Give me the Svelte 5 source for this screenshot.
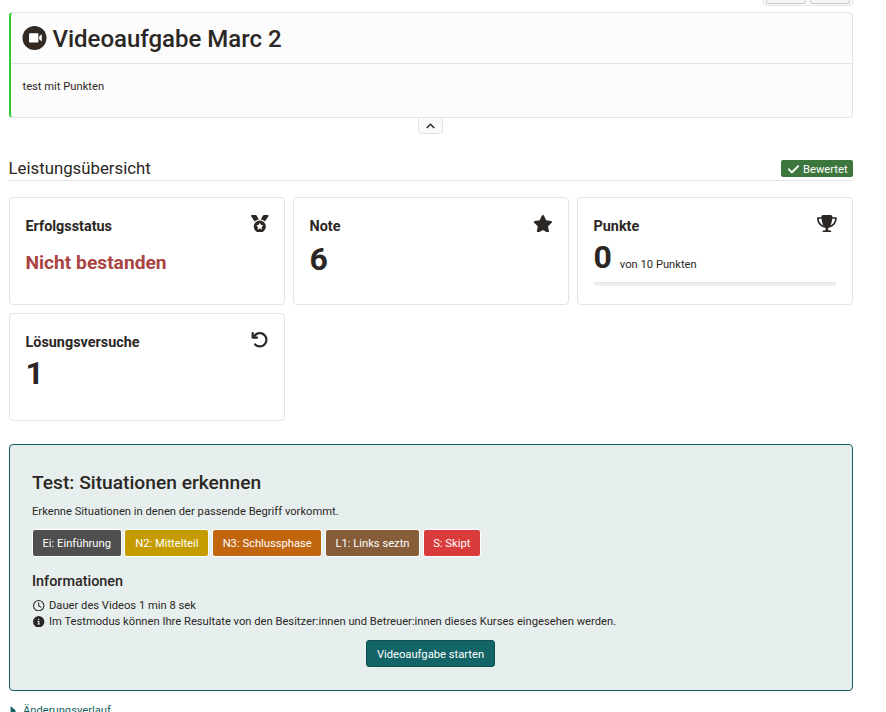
<script>
  const tags = [
    { label: 'Ei: Einführung', tone: 'gray', width: 89.5 },
    { label: 'N2: Mittelteil', tone: 'gold', width: 85.1 },
    { label: 'N3: Schlussphase', tone: 'orange', width: 110 },
    { label: 'L1: Links seztn', tone: 'brown', width: 95 },
    { label: 'S: Skipt', tone: 'red', width: 58 }
  ];

  const medal =
    'M4.1 38.2C1.4 34.2 0 29.4 0 24.6C0 11 11 0 24.6 0H133.9c11.2 0 21.7 5.9 27.4 15.5l68.5 114.1c-48.2 6.1-91.3 28.6-123.4 61.9L4.1 38.2zm503.7 0L405.6 191.5c-32.1-33.3-75.2-55.8-123.4-61.9L350.7 15.5C356.5 5.9 366.9 0 378.1 0H487.4C501 0 512 11 512 24.6c0 4.8-1.4 9.6-4.1 13.6zM80 336a176 176 0 1 1 352 0A176 176 0 1 1 80 336zm184.4-94.9c-3.4-7-13.3-7-16.8 0l-22.4 45.4c-1.4 2.8-4 4.7-7 5.1L168 298.9c-7.7 1.1-10.7 10.5-5.2 16l36.3 35.4c2.2 2.2 3.2 5.2 2.7 8.3l-8.6 49.9c-1.3 7.6 6.7 13.5 13.6 9.9l44.8-23.6c2.7-1.4 6-1.4 8.7 0l44.8 23.6c6.9 3.6 14.9-2.2 13.6-9.9l-8.6-49.9c-.5-3 .5-6.1 2.7-8.3l36.3-35.4c5.6-5.4 2.5-14.8-5.2-16l-50.1-7.3c-3-.4-5.7-2.4-7-5.1l-22.4-45.4z';
  const star =
    'M316.9 18C311.6 7 300.4 0 288.1 0s-23.4 7-28.8 18L195 150.3 51.4 171.5c-12 1.8-22 10.2-25.7 21.7s-.7 24.2 7.9 32.7L137.8 329 113.2 474.7c-2 12 3 24.2 12.9 31.3s23 8 33.8 2.3l128.3-68.5 128.3 68.5c10.8 5.7 23.9 4.9 33.8-2.3s14.9-19.3 12.9-31.3L438.5 329 542.7 225.9c8.6-8.5 11.7-21.2 7.9-32.7s-13.7-19.9-25.7-21.7L381.2 150.3 316.9 18z';
  const trophy =
    'M400 0H176c-26.5 0-48.1 21.8-47.1 48.2c.2 5.3 .4 10.6 .7 15.8H24C10.7 64 0 74.7 0 88c0 92.6 33.5 157 78.5 200.7c44.3 43.1 98.3 64.8 138.1 75.8c23.4 6.5 39.4 26 39.4 45.6c0 20.9-17 37.9-37.9 37.9H192c-17.7 0-32 14.3-32 32s14.3 32 32 32H384c17.7 0 32-14.3 32-32s-14.3-32-32-32H357.9C337 448 320 431 320 410.1c0-19.6 15.9-39.2 39.4-45.6c39.9-11 93.9-32.7 138.2-75.8C542.5 245 576 180.6 576 88c0-13.3-10.7-24-24-24H446.4c.3-5.2 .5-10.4 .7-15.8C448.1 21.8 426.5 0 400 0zM48.9 112h84.4c9.1 90.1 29.2 150.3 51.9 190.6c-24.9-11-50.8-26.5-73.2-48.3c-32-31.1-58-76-63-142.3zM464.1 254.3c-22.4 21.8-48.3 37.3-73.2 48.3c22.7-40.3 42.8-100.5 51.9-190.6h84.4c-5.1 66.3-31.1 111.2-63 142.3z';
  const undo =
    'M125.7 160H176c17.7 0 32 14.3 32 32s-14.3 32-32 32H48c-17.7 0-32-14.3-32-32V64c0-17.7 14.3-32 32-32s32 14.3 32 32v51.2L97.6 97.6c87.5-87.5 229.3-87.5 316.8 0s87.5 229.3 0 316.8s-229.3 87.5-316.8 0c-12.5-12.5-12.5-32.8 0-45.3s32.8-12.5 45.3 0c62.5 62.5 163.8 62.5 226.3 0s62.5-163.8 0-226.3s-163.8-62.5-226.3 0L125.7 160z';
  const clock =
    'M464 256A208 208 0 1 1 48 256a208 208 0 1 1 416 0zM0 256a256 256 0 1 0 512 0A256 256 0 1 0 0 256zM232 120V256c0 8 4 15.5 10.7 20l96 64c11 7.4 25.9 4.4 33.3-6.7s4.4-25.9-6.7-33.3L280 243.2V120c0-13.3-10.7-24-24-24s-24 10.7-24 24z';
  const info =
    'M256 512A256 256 0 1 0 256 0a256 256 0 1 0 0 512zM216 336h24V272H216c-13.3 0-24-10.7-24-24s10.7-24 24-24h48c13.3 0 24 10.7 24 24v88h8c13.3 0 24 10.7 24 24s-10.7 24-24 24H216c-13.3 0-24-10.7-24-24s10.7-24 24-24zm40-208a32 32 0 1 1 0 64 32 32 0 1 1 0-64z';
  const check =
    'M438.6 105.4c12.5 12.5 12.5 32.8 0 45.3l-256 256c-12.5 12.5-32.8 12.5-45.3 0l-128-128c-12.5-12.5-12.5-32.8 0-45.3s32.8-12.5 45.3 0L160 338.7 393.4 105.4c12.5-12.5 32.8-12.5 45.3 0z';

  const cards = [
    { title: 'Erfolgsstatus', icon: medal, box: '0 0 512 512', width: 17.6, status: 'Nicht bestanden' },
    { title: 'Note', icon: star, box: '0 0 576 512', width: 19.8, value: '6' },
    { title: 'Punkte', icon: trophy, box: '0 0 576 512', width: 19.8, value: '0', addon: 'von 10 Punkten', progress: true },
    { title: 'Lösungsversuche', icon: undo, box: '0 0 512 512', width: 17.6, value: '1', tight: true }
  ];
</script>

<main>
  <div class="toolbar">
    <div class="group"><span></span><span></span></div>
  </div>

  <section class="intro">
    <header>
      <svg width="25" height="25" viewBox="0 0 25 25">
        <circle cx="12.5" cy="12.1" r="12" fill="#332923" />
        <rect x="7" y="7.3" width="9.4" height="9.2" rx="1" fill="#fff" />
        <path d="M17.2 10.6 19.8 8.2v7.4l-2.6-2.4z" fill="#fff" />
      </svg>
      <h1>Videoaufgabe Marc 2</h1>
    </header>
    <p>test mit Punkten</p>
  </section>
  <div class="collapse-row">
    <button class="collapse" aria-label="Einklappen">
      <svg width="9" height="6" viewBox="0 0 9 6"><path d="M.8 5.1 4.5 1.3 8.2 5.1" fill="none" stroke="#2b2724" stroke-width="1.5" /></svg>
    </button>
  </div>

  <div class="overview">
    <h2>Leistungsübersicht</h2>
    <span class="graded">
      <svg width="11" height="12.6" viewBox="0 0 448 512"><path d={check} fill="#fff" stroke="#fff" stroke-width="14" /></svg>
      <span>Bewertet</span>
    </span>
  </div>

  <div class="cards">
    {#each cards as card}
      <article>
        <div class="card-head">
          <h3>{card.title}</h3>
          <svg width={card.width} height="17.6" viewBox={card.box}><path d={card.icon} fill="#2b2724" /></svg>
        </div>
        {#if card.status}
          <div class="status">{card.status}</div>
        {:else}
          <div class="value" class:scored={card.progress} class:tight={card.tight}>
            <strong>{card.value}</strong>{#if card.addon}<small>{card.addon}</small>{/if}
          </div>
        {/if}
        {#if card.progress}<div class="progress"></div>{/if}
      </article>
    {/each}
  </div>

  <section class="test">
    <h2>Test: Situationen erkennen</h2>
    <p>Erkenne Situationen in denen der passende Begriff vorkommt.</p>
    <div class="tags">
      {#each tags as tag}
        <span class={tag.tone} style="width: {tag.width}px">{tag.label}</span>
      {/each}
    </div>
    <h4>Informationen</h4>
    <div class="line">
      <svg width="11.4" height="11.4" viewBox="0 0 512 512"><path d={clock} fill="#2b2724" /></svg>
      <span>Dauer des Videos 1 min 8 sek</span>
    </div>
    <div class="line">
      <svg width="11.4" height="11.4" viewBox="0 0 512 512"><path d={info} fill="#2b2724" /></svg>
      <span>Im Testmodus können Ihre Resultate von den Besitzer:innen und Betreuer:innen dieses Kurses eingesehen werden.</span>
    </div>
    <button class="start">Videoaufgabe starten</button>
  </section>

  <div class="history">
    <svg width="6" height="10" viewBox="0 0 6 10"><path d="M.6 0 5.6 4.4V5.6L.6 10z" fill="#136062" /></svg>
    <span>Änderungsverlauf</span>
  </div>
</main>

<style>
  :global(body) {
    background: #fff;
    overflow: hidden;
  }
  main {
    box-sizing: border-box;
    width: 886px;
    height: 712px;
    overflow: hidden;
    padding: 0 33px 0 9px;
    font: 11.2px/16px Roboto, sans-serif;
    color: #2b2724;
  }
  h1, h2, h3, h4, p {
    margin: 0;
    font-weight: 500;
  }
  p { font-weight: 400; }
  svg { display: block; flex: none; }
  button { font: inherit; padding: 0; box-sizing: border-box; }

  .toolbar {
    height: 12px;
    display: flex;
    justify-content: flex-end;
    align-items: flex-start;
  }
  .group {
    box-sizing: border-box;
    width: 90px;
    height: 6px;
    padding: 0 2px;
    display: flex;
    gap: 4px;
    background: #fafafa;
    border: 1px solid #e4e4e4;
    border-top: 0;
    border-radius: 0 0 4px 4px;
  }
  .group span {
    box-sizing: border-box;
    flex: 1;
    height: 4px;
    border: 1px solid #ccc;
    border-top: 0;
    border-radius: 0 0 3px 3px;
    background: #f6f6f6;
  }

  .intro {
    box-sizing: border-box;
    height: 106px;
    border: 1px solid #e4e4e4;
    border-left: 2px solid #32c832;
    border-radius: 4px;
    background: #fcfcfc;
  }
  .intro header {
    box-sizing: border-box;
    height: 51px;
    display: flex;
    align-items: center;
    gap: 5.4px;
    padding: 1px 0 0 11px;
    border-bottom: 1px solid #e4e4e4;
  }
  h1 { font-size: 24px; line-height: 32px; }
  .intro p { padding: 15px 0 0 11.5px; }
  .collapse-row {
    display: flex;
    justify-content: center;
    padding-right: 1px;
    margin-top: -1px;
  }
  .collapse {
    display: flex;
    justify-content: center;
    align-items: center;
    width: 25px;
    height: 17px;
    padding-top: 1px;
    border: 1px solid #e4e4e4;
    border-radius: 0 0 3px 3px;
    background: #fafafa;
  }

  .overview {
    box-sizing: border-box;
    height: 24px;
    margin-top: 23px;
    display: flex;
    align-items: flex-start;
    justify-content: space-between;
    border-bottom: 1px solid #e4e4e4;
  }
  .overview h2 {
    margin-left: -0.5px;
    font-size: 16.8px;
    line-height: 22px;
    font-weight: 400;
  }
  .graded {
    box-sizing: border-box;
    width: 72px;
    height: 17px;
    margin-top: 3px;
    padding: 1px 0 0 7px;
    display: flex;
    align-items: center;
    gap: 4px;
    border-radius: 2px;
    background: #3c763d;
    color: #fff;
  }
  .graded span { line-height: 17px; }

  .cards {
    margin-top: 16px;
    display: grid;
    grid-template-columns: repeat(3, 276px);
    grid-auto-rows: 108px;
    gap: 8px;
  }
  article {
    box-sizing: border-box;
    padding: 16px 15.5px 0;
    border: 1px solid #e4e4e4;
    border-radius: 4px;
  }
  .card-head { display: flex; justify-content: space-between; height: 25px; }
  .card-head svg { margin-top: 0.6px; }
  h3 { font-size: 14.4px; line-height: 26px; font-weight: 700; }
  .status {
    padding-top: 11px;
    font-size: 19.2px;
    line-height: 26px;
    font-weight: 700;
    color: #a94442;
  }
  .value { display: flex; align-items: baseline; gap: 8px; padding-top: 2px; height: 34px; }
  .value.scored { padding-top: 0; height: 36px; }
  .value.tight { padding-top: 0; }
  strong { font-size: 32px; line-height: 36px; }
  small { font-size: 11.2px; }
  .progress {
    height: 4px;
    margin: 7px 0.5px 0 0;
    border-radius: 3px;
    background: #f2f2f2;
    box-shadow: inset 0 1px 2px rgba(0, 0, 0, 0.08);
  }

  .test {
    box-sizing: border-box;
    height: 247px;
    margin-top: 23px;
    padding: 23px 22px 0;
    border: 1px solid #136062;
    border-radius: 4px;
    background: #e7efee;
  }
  .test h2 { font-size: 19.2px; line-height: 30px; }
  .test p { margin-top: 6px; }
  .tags { display: flex; gap: 2.8px; margin-top: 9px; }
  .tags span {
    box-sizing: border-box;
    height: 28px;
    line-height: 28px;
    text-align: center;
    white-space: nowrap;
    color: #fff;
    border: 1px solid #fff;
    border-radius: 3px;
  }
  .gray { background: #4f4f4f; }
  .gold { background: #c59c00; }
  .orange { background: #c1650f; }
  .brown { background: #865d38; }
  .red { background: #d93a3a; }
  h4 { font-size: 14.4px; line-height: 20px; margin: 15px 0 6px; }
  .line { display: flex; align-items: center; gap: 4.3px; padding-left: 1.3px; height: 16px; }
  .line svg { margin-top: -1px; }
  .start {
    display: block;
    width: 129px;
    height: 27px;
    margin: 10px auto 0 334px;
    padding-top: 2px;
    border: 1px solid #0f4d4f;
    border-radius: 3px;
    background: #136466;
    color: #fff;
  }
  .history {
    display: flex;
    align-items: center;
    gap: 7.5px;
    margin-top: 11px;
    padding-left: 0.5px;
    color: #136062;
  }
  .history span { padding-top: 1px; }
</style>
